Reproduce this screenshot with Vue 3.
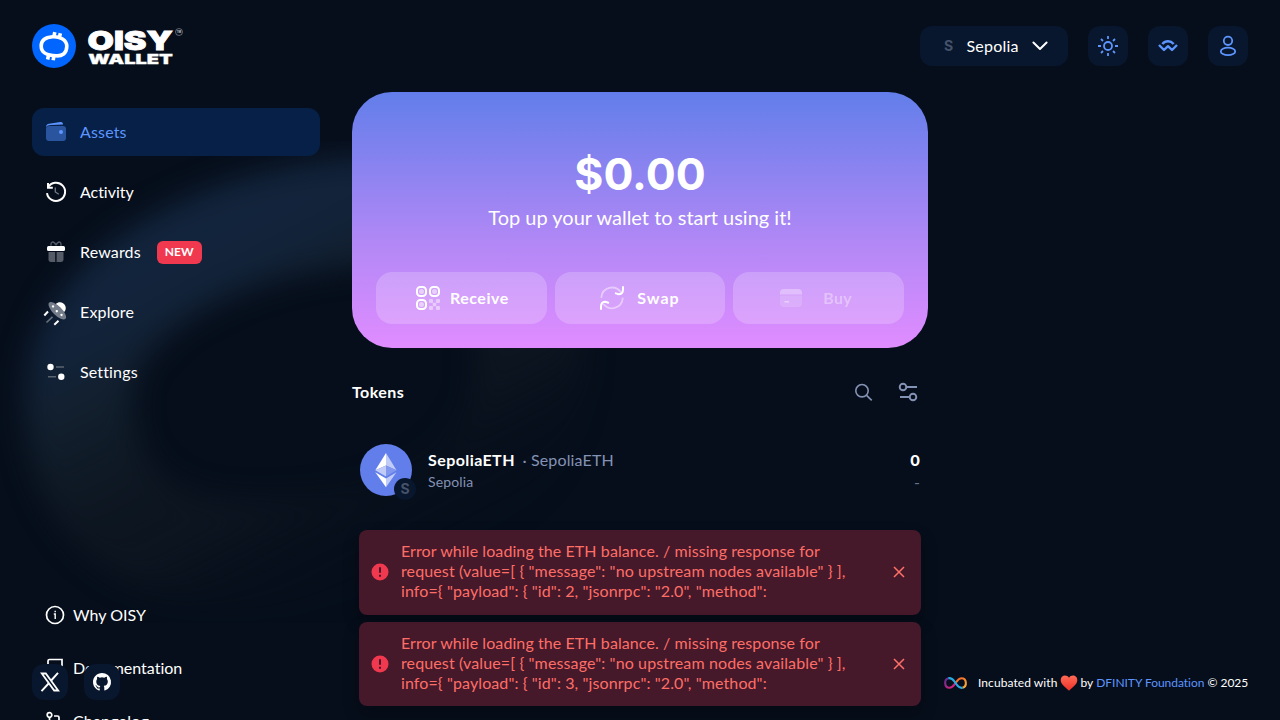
<script setup>
const errors = [2, 3]
</script>

<template>
  <div class="page">
    <svg class="backdrop" width="1280" height="720" viewBox="0 0 1280 720">
      <defs>
        <linearGradient id="ringFill" gradientUnits="userSpaceOnUse" x1="250" y1="180" x2="450" y2="560">
          <stop offset="0" stop-color="#12243c" />
          <stop offset=".15" stop-color="#12233a" />
          <stop offset=".3" stop-color="#121f2d" />
          <stop offset=".55" stop-color="#101923" stop-opacity=".7" />
          <stop offset=".68" stop-color="#101923" stop-opacity=".6" />
          <stop offset=".82" stop-color="#0b141e" stop-opacity=".2" />
          <stop offset="1" stop-color="#08111d" stop-opacity="0" />
        </linearGradient>
        <filter id="soft" x="-20%" y="-20%" width="140%" height="140%" color-interpolation-filters="sRGB"><feGaussianBlur stdDeviation="14" /></filter>
      </defs>
      <path d="M365 211C220 220 88 292 80 385C72 480 125 554 250 554C410 554 530 485 530 365C530 250 465 205 365 211Z" fill="none" stroke="url(#ringFill)" stroke-width="108" filter="url(#soft)" />
    </svg>

    <header class="header">
      <svg class="logo" width="152" height="44" viewBox="0 0 152 44">
        <circle cx="22" cy="22" r="22" fill="#06f" />
        <g fill="none" stroke="#fff" stroke-width="3.6">
          <path d="M20.500 12.800C27 12.200 35 15.500 34.800 22.500C34.600 29.700 30 32.200 24 31.800C15.500 31.400 9.200 29.500 9.200 22C9.200 15.500 14 13.300 20.500 12.800Z" />
          <path d="M21.800 13L22.800 8.200M27.300 13.500L28.400 9.200M15.600 35.500L16.600 31M21.200 36.200L22 31.500" />
        </g>
        <g fill="#fff" stroke="#fff" font-family="Inter" font-weight="900">
          <text x="55.5" y="26.2" font-size="25.5" stroke-width=".8" textLength="85.5" lengthAdjust="spacingAndGlyphs">OISY</text>
          <text x="56.3" y="39.8" font-size="13.3" stroke-width=".3" textLength="84.5" lengthAdjust="spacingAndGlyphs">WALLET</text>
        </g>
        <circle cx="147" cy="8" r="3.5" fill="none" stroke="#9aa0a8" stroke-width=".6" />
        <text x="147" y="9" text-anchor="middle" font-family="Inter" font-weight="700" font-size="2.8" fill="#c4c8ce">TM</text>
      </svg>
      <div class="controls">
        <button class="network">
          <span class="net-mark">S</span>
          <span class="net-name">Sepolia</span>
          <svg width="16" height="10" viewBox="0 0 16 10"><path d="M1.4 1.5L8 8L14.6 1.5" fill="none" stroke="#fff" stroke-width="2" stroke-linecap="round" stroke-linejoin="round" /></svg>
        </button>
        <button class="square">
          <svg width="20" height="20" viewBox="0 0 20 20" fill="none" stroke="#5c95ff" stroke-width="1.8"><circle cx="10" cy="10" r="4" /><path d="M10 0v3M10 17v3M0 10h3M17 10h3M3 3l2 2M15 15l2 2M17 3l-2 2M5 15l-2 2" /></svg>
        </button>
        <button class="square">
          <svg width="20" height="14" viewBox="0 0 20 14" fill="none" stroke="#5c95ff" stroke-width="2.4"><path d="M1 6L6 11L10 7.200L14 11L19 6" stroke-linejoin="round" /><path d="M4.300 5C7.500 1.300 12.500 1.300 15.700 5" /></svg>
        </button>
        <button class="square">
          <svg width="18" height="22" viewBox="0 0 18 22" fill="none" stroke="#5c95ff" stroke-width="1.8"><circle cx="9" cy="5.8" r="4.2" /><ellipse cx="9" cy="16.4" rx="7.200" ry="3.700" /></svg>
        </button>
      </div>
    </header>

    <div class="body">
      <aside class="side">
        <nav class="nav">
          <a class="item active">
            <svg width="24" height="24" viewBox="0 0 24 24"><rect x="2" y="6" width="20" height="15" rx="3" fill="#2a559e" /><path d="M2 7.2C2 4.8 3.3 4 5 3.7L16.5 2C18.3 1.8 19 2.8 19 4.5L7 5C4.5 5 2.8 5.7 2 7.2Z" fill="#5c95ff" /><circle cx="17" cy="12" r="2" fill="#5c95ff" /></svg>
            <span>Assets</span>
          </a>
          <a class="item">
            <svg width="24" height="24" viewBox="0 0 24 24" fill="none" stroke="#fff" stroke-width="2"><path d="M4.1 7.300A9.1 9.1 0 1 1 3 13.100" /><path d="M4 3v4.700h4.800" /><path d="M11.3 7.5V12l3.5 2.3" stroke="#737b88" stroke-width="1.3" /></svg>
            <span class="activity">Activity</span>
          </a>
          <a class="item">
            <svg width="24" height="24" viewBox="0 0 24 24"><path d="M4.500 12h6.700v10H7c-1.600 0-2.500-.9-2.500-2.500zM12.600 12H19.500v7.500c0 1.600-.9 2.500-2.500 2.500h-4.400z" fill="#555c67" /><rect x="3" y="6" width="18" height="5" rx="1.5" fill="#fff" /><path d="M12 5.300C10 .6 6.500 1 7 5.700M12 5.300C14 .6 17.500 1 17 5.700" fill="none" stroke="#555c67" stroke-width="1.400" /></svg>
            <span>Rewards</span><b class="new">NEW</b>
          </a>
          <a class="item">
            <svg width="24" height="24" viewBox="0 0 24 24"><g transform="rotate(45 14 10)"><path d="M8.200 7.500C8.200-.5 19.800-.5 19.800 7.500Z" fill="#fff" /><ellipse cx="14" cy="11" rx="11.500" ry="4.600" fill="#747c89" /><g fill="#fff"><circle cx="8" cy="11" r="1.200" /><circle cx="14" cy="11.700" r="1.200" /><circle cx="20" cy="11" r="1.200" /></g></g><path d="M.3 15.500L4 11.500M10.300 24.700L14.500 20.800" stroke="#fff" stroke-width="2" /><path d="M2.500 22.500L8.500 16.800" stroke="#65707d" stroke-width="1.700" /></svg>
            <span>Explore</span>
          </a>
          <a class="item">
            <svg width="24" height="24" viewBox="0 0 24 24"><circle cx="6.500" cy="7" r="3.200" fill="#fff" /><circle cx="17.300" cy="16.800" r="3.200" fill="#fff" /><path d="M12 7h8M4 16.800h8" stroke="#596470" stroke-width="1.600" /></svg>
            <span>Settings</span>
          </a>
        </nav>
        <nav class="links">
          <a><svg width="20" height="20" viewBox="0 0 20 20" fill="none" stroke="#fff" stroke-width="1.700"><circle cx="10" cy="10" r="8.500" /><path d="M8.800 9H10.200V14M10.200 5.700v1.600" stroke-width="1.400" /></svg><span>Why OISY</span></a>
          <a><svg width="20" height="20" viewBox="0 0 20 20" fill="none" stroke="#fff" stroke-width="1.700"><path d="M3 17V3Q3 1.500 4.500 1.500H17V17M3 17Q3 15 5 15H17M3 17Q3 19 5 19H17" /></svg><span>Documentation</span></a>
          <a><svg width="20" height="20" viewBox="0 0 20 20" fill="none" stroke="#fff" stroke-width="1.700"><circle cx="4.500" cy="4" r="2.300" /><circle cx="4.500" cy="16" r="2.300" /><path d="M4.500 6v8M9 5h3.500Q14 5 14 6.500V14" /><circle cx="14" cy="16" r="2.300" /></svg><span class="changelog">Changelog</span></a>
        </nav>
      </aside>

      <main class="main">
        <section class="hero">
          <div class="total">$0.00</div>
          <p class="topup">Top up your wallet to start using it!</p>
          <div class="actions">
            <button class="receive">
              <svg width="24" height="24" viewBox="0 0 24 24" fill="none" stroke="#fff" stroke-width="2"><rect x="1" y="1" width="9" height="9" rx="3.300" /><rect x="14" y="1" width="9" height="9" rx="3.300" /><rect x="1" y="14" width="9" height="9" rx="3.300" /><g fill="#fff" fill-opacity=".5" stroke="none"><circle cx="5.500" cy="5.500" r="2.500" /><circle cx="18.500" cy="5.500" r="2.500" /><circle cx="5.500" cy="18.500" r="2.500" /></g><g fill="#fff" fill-opacity=".45" stroke="none"><rect x="13" y="13" width="4" height="4" rx="1" /><rect x="20" y="13" width="4" height="4" rx="1" /><rect x="16.800" y="16.800" width="3.400" height="3.400" rx=".5" /><rect x="13" y="20" width="4" height="4" rx="1" /><rect x="20" y="20" width="4" height="4" rx="1" /></g></svg>
              <span>Receive</span>
            </button>
            <button class="swap">
              <svg width="24" height="24" viewBox="0 0 24 24" fill="none" stroke="#fff" stroke-linecap="round"><g stroke-opacity=".45" stroke-width="1.900"><path d="M1.400 11A10.700 10.700 0 0 1 20.500 5.700M22.700 12.500A10.700 10.700 0 0 1 4 18.600" /></g><path d="M23 1v2.500Q23 8.300 18.500 8.300L15.800 7.400M1 23V20.500Q1 15.700 5.500 15.700L8.300 16.700" stroke-width="2" /></svg>
              <span>Swap</span>
            </button>
            <button class="buy">
              <svg width="24" height="20" viewBox="0 0 24 20"><path d="M1 6.500V5Q1 1 5 1H19Q23 1 23 5V6.500Z" fill="#fff" fill-opacity=".32" /><path d="M1 7.500H23V15Q23 19 19 19H5Q1 19 1 15Z" fill="#fff" fill-opacity=".14" /><path d="M5.500 13.800H10" stroke="#fff" stroke-opacity=".4" stroke-width="1.600" /></svg>
              <span>Buy</span>
            </button>
          </div>
        </section>

        <div class="tokens-head">
          <h2>Tokens</h2>
          <svg width="20" height="20" viewBox="0 0 20 20" fill="none" stroke="#8492b5" stroke-width="1.600"><circle cx="9" cy="8.700" r="6.200" /><path d="M13.600 13.400L18.700 18.400" /></svg>
          <svg width="20" height="20" viewBox="0 0 20 20" fill="none" stroke="#8492b5" stroke-width="1.900"><circle cx="5" cy="5" r="3.300" /><path d="M8.500 5H19M2 15h9.500" /><circle cx="15" cy="15" r="3.300" /></svg>
        </div>

        <div class="token">
          <div class="coin">
            <svg width="52" height="52" viewBox="0 0 52 52"><circle cx="26" cy="26" r="26" fill="#627eea" /><path d="M26 9V21.400L36.500 26.200Z" fill="#c0cbf7" /><path d="M26 9L15.300 26.200L26 21.400Z" fill="#fff" /><path d="M26 34.500V43.200L36.500 28.300Z" fill="#c0cbf7" /><path d="M26 43.200V34.500L15.300 28.300Z" fill="#fff" /><path d="M26 32.500L36.500 26.200L26 21.400Z" fill="#8298ee" /><path d="M15.300 26.200L26 32.500V21.400Z" fill="#c0cbf7" /></svg>
            <span class="badge">S</span>
          </div>
          <div class="token-info">
            <div class="line"><b>SepoliaETH</b><span class="sym">· SepoliaETH</span></div>
            <div class="sub">Sepolia</div>
          </div>
          <div class="amount"><b>0</b><div class="dash">-</div></div>
        </div>
      </main>
    </div>

    <div class="toasts">
      <div v-for="id in errors" :key="id" class="toast">
        <svg width="18" height="18" viewBox="0 0 18 18"><circle cx="9" cy="9" r="8.500" fill="#f0384f" /><path d="M9 4.300V9.800M9 11.700V13.700" stroke="#47182b" stroke-width="2" /></svg>
        <p><span class="l1">Error while loading the ETH balance. / missing response for</span><span class="l2">request (value=[ { "message": "no upstream nodes available" } ],</span><span class="l3">info={ "payload": { "id": {{ id }}, "jsonrpc": "2.0", "method":</span></p>
        <svg width="12" height="12" viewBox="0 0 12 12"><path d="M1 1L11 11M11 1L1 11" stroke="#ff7168" stroke-width="1.500" /></svg>
      </div>
    </div>

    <footer class="footer">
      <div class="social">
        <a><svg width="20" height="20" viewBox="0 0 20 20" fill="none" stroke="#fff"><path d="M1.800 1.500H5.800L18.200 18.500H14.200Z" stroke-width="1.800" /><path d="M18 .8L11.200 8.500M8.600 11.500L1.500 19.200" stroke-width="1.900" /></svg></a>
        <a><svg width="18" height="18" viewBox="0 0 16 16" fill="#fff"><path d="M8 0C3.580 0 0 3.580 0 8c0 3.540 2.290 6.530 5.470 7.590.4.070.55-.17.55-.38v-1.490c-2.010.37-2.530-.49-2.690-.94-.09-.23-.48-.94-.82-1.130-.28-.15-.68-.52-.01-.53.63-.01 1.080.58 1.230.82.72 1.210 1.870.87 2.330.66.070-.52.28-.87.51-1.070-1.780-.2-3.640-.89-3.640-3.950 0-.87.31-1.590.82-2.150-.08-.2-.36-1.020.08-2.120 0 0 .67-.21 2.200.82a7.500 7.500 0 0 1 4 0c1.530-1.040 2.200-.82 2.200-.82.44 1.100.16 1.920.08 2.120.51.56.82 1.270.82 2.150 0 3.070-1.870 3.750-3.650 3.950.29.25.54.73.54 1.480v2.200c0 .21.15.46.55.38A8 8 0 0 0 8 0Z" /></svg></a>
      </div>
      <div class="credit">
        <svg class="inf" width="23" height="12" viewBox="0 0 23 12" fill="none" stroke-width="2.100"><defs><linearGradient id="infLeft" x1="0" y1="0" x2="1" y2="1"><stop offset="0" stop-color="#592f91" /><stop offset="1" stop-color="#ed1e79" /></linearGradient><linearGradient id="infRight" x1="0" y1="0" x2="1" y2="1"><stop offset="0" stop-color="#f15a24" /><stop offset="1" stop-color="#fbb03b" /></linearGradient></defs><path d="M4.500 1.200C-.2 2.200 0 10.800 5.500 10.800C8.500 10.800 10 8 11.500 6" stroke="url(#infLeft)" /><path d="M11.500 6C13 4 14.500 1.200 17.500 1.200C22.900 1.200 23.300 9.500 18.500 10.800" stroke="url(#infRight)" /><path d="M4.300 1.250C8.500 .4 9.800 3.800 11.500 6C13.200 8.200 14.500 11.600 18.700 10.750" stroke="#29abe2" /></svg>
        <span class="inc">Incubated with</span>
        <svg width="18" height="16" viewBox="0 0 18 16"><defs><linearGradient id="heartFill" x1="0" y1="0" x2="0" y2="1"><stop offset="0" stop-color="#ff6a55" /><stop offset="1" stop-color="#ee3028" /></linearGradient></defs><path d="M9 2.800C11-.6 17.400-.2 17.300 5.300C17.200 9.400 12.400 12.700 9 15.700C5.600 12.700.8 9.400.7 5.300C.6-.2 7-.6 9 2.800Z" fill="url(#heartFill)" /></svg>
        <span class="by">by</span> <span class="dfin">DFINITY Foundation</span> <span>© 2025</span>
      </div>
    </footer>
  </div>
</template>

<style>
body { margin: 0; background: #060e1b; }
</style>

<style scoped>
.page { position: relative; width: 1280px; height: 720px; overflow: hidden; background: #060e1b; color: #fff; font: 16px/20px Lato, sans-serif; font-variant-ligatures: none; }
.page * { box-sizing: border-box; }
.page svg { display: block; flex: none; overflow: visible; }
.backdrop { position: absolute; inset: 0; }
button { border: 0; padding: 0; color: inherit; font: inherit; }
span, b { white-space: nowrap; }
.header { position: relative; display: flex; justify-content: space-between; padding: 24px 32px 0; height: 92px; }
.controls { display: flex; gap: 20px; padding-top: 2px; }
.network { display: flex; align-items: center; width: 148px; height: 40px; padding-left: 24px; border-radius: 12px; background: #08172d; }
.net-mark { width: 22.500px; color: #465269; font: 700 14px/20px Inter, sans-serif; text-align: left; }
.net-name { width: 65px; letter-spacing: .2px; text-align: left; }
.square { display: flex; align-items: center; justify-content: center; width: 40px; height: 40px; border-radius: 12px; background: #08172d; }
.body { position: relative; display: flex; gap: 32px; padding: 0 32px; }
.side { width: 288px; padding-top: 16px; }
.nav { display: flex; flex-direction: column; gap: 12px; }
.item { display: flex; align-items: center; height: 48px; padding-left: 12px; gap: 12px; border-radius: 12px; letter-spacing: .15px; }
.item .activity { letter-spacing: -.04px; }
.item.active { background: #062047; color: #5c95ff; }
.new { margin-left: 4px; width: 45px; height: 23px; border-radius: 6px; background: #f0384f; font-size: 12px; line-height: 22px; text-align: center; }
.links { display: flex; flex-direction: column; gap: 33px; padding: 209px 0 0 13px; }
.links a { display: flex; gap: 8px; height: 20px; align-items: center; }
.changelog { letter-spacing: .18px; }
.main { width: 576px; }
.hero { height: 256px; border-radius: 40px; padding: 56px 24px 0; background: linear-gradient(#627eea, #b388f6 60%, #e08cff); text-align: center; }
.total { font: 700 44.500px/52px Inter, sans-serif; }
.topup { margin: 4px 0 0; font-size: 20px; line-height: 26px; }
.actions { display: grid; grid-template-columns: repeat(3, 1fr); gap: 8px; margin-top: 42px; }
.actions button { display: flex; align-items: center; height: 52px; border-radius: 16px; background: rgba(255, 255, 255, .2); font-weight: 700; }
.actions .receive { padding-left: 40px; gap: 10px; letter-spacing: .5px; }
.actions .swap { padding-left: 45px; gap: 13.500px; letter-spacing: 1px; }
.actions .buy { padding-left: 46px; gap: 20px; letter-spacing: .3px; }
.buy span { opacity: .35; }
.tokens-head { display: flex; align-items: center; height: 40px; margin-top: 24px; padding-right: 10px; gap: 25px; }
.tokens-head h2 { flex: 1; margin: 0; font-size: 16px; line-height: 20px; letter-spacing: .45px; }
.token { display: flex; margin-top: 32px; padding: 0 8px; }
.coin { position: relative; width: 52px; height: 52px; margin-right: 16px; }
.badge { position: absolute; left: 34px; top: 34px; width: 22px; height: 22px; border-radius: 50%; background: #08172d; color: #465269; font: 700 14px/22px Inter, sans-serif; text-align: center; }
.token-info { flex: 1; padding-top: 6px; }
.line { display: flex; gap: 7.500px; }
.line b { letter-spacing: .42px; }
.sym { color: #8492b5; letter-spacing: .15px; }
.sub { margin-top: 2px; font-size: 14px; color: #8492b5; letter-spacing: .15px; }
.amount { padding-top: 6px; text-align: right; }
.amount b { font: 700 15px/20px Inter, sans-serif; }
.dash { margin-top: 1px; color: #65728c; }
.toasts { position: absolute; left: 359px; bottom: 14px; width: 562px; display: flex; flex-direction: column; gap: 7px; }
.toast { display: flex; align-items: center; height: 84.500px; padding: 0 16px 0 12px; border-radius: 8px; background: #45182a; color: #ff6e66; box-shadow: 0 8px 16px rgba(0, 0, 0, .25); }
.toast p { flex: 1; margin: 0 0 2px 12px; }
.toast p span { display: block; }
.l1 { letter-spacing: .085px; }
.l2 { letter-spacing: .12px; }
.l3 { letter-spacing: .1px; }
.footer { position: absolute; left: 32px; right: 32px; bottom: 20px; height: 36px; display: flex; justify-content: space-between; align-items: center; }
.social { display: flex; gap: 16px; }
.social a { display: flex; align-items: center; justify-content: center; width: 36px; height: 36px; border-radius: 12px; background: #08172d; }
.credit { display: flex; align-items: center; gap: 3px; width: 304px; padding-top: 2px; font-size: 12px; }
.inf { margin-right: 8px; }
.inc { letter-spacing: .07px; }
.by { margin-left: -1px; }
.dfin { color: #5c95ff; letter-spacing: -.03px; }
</style>
